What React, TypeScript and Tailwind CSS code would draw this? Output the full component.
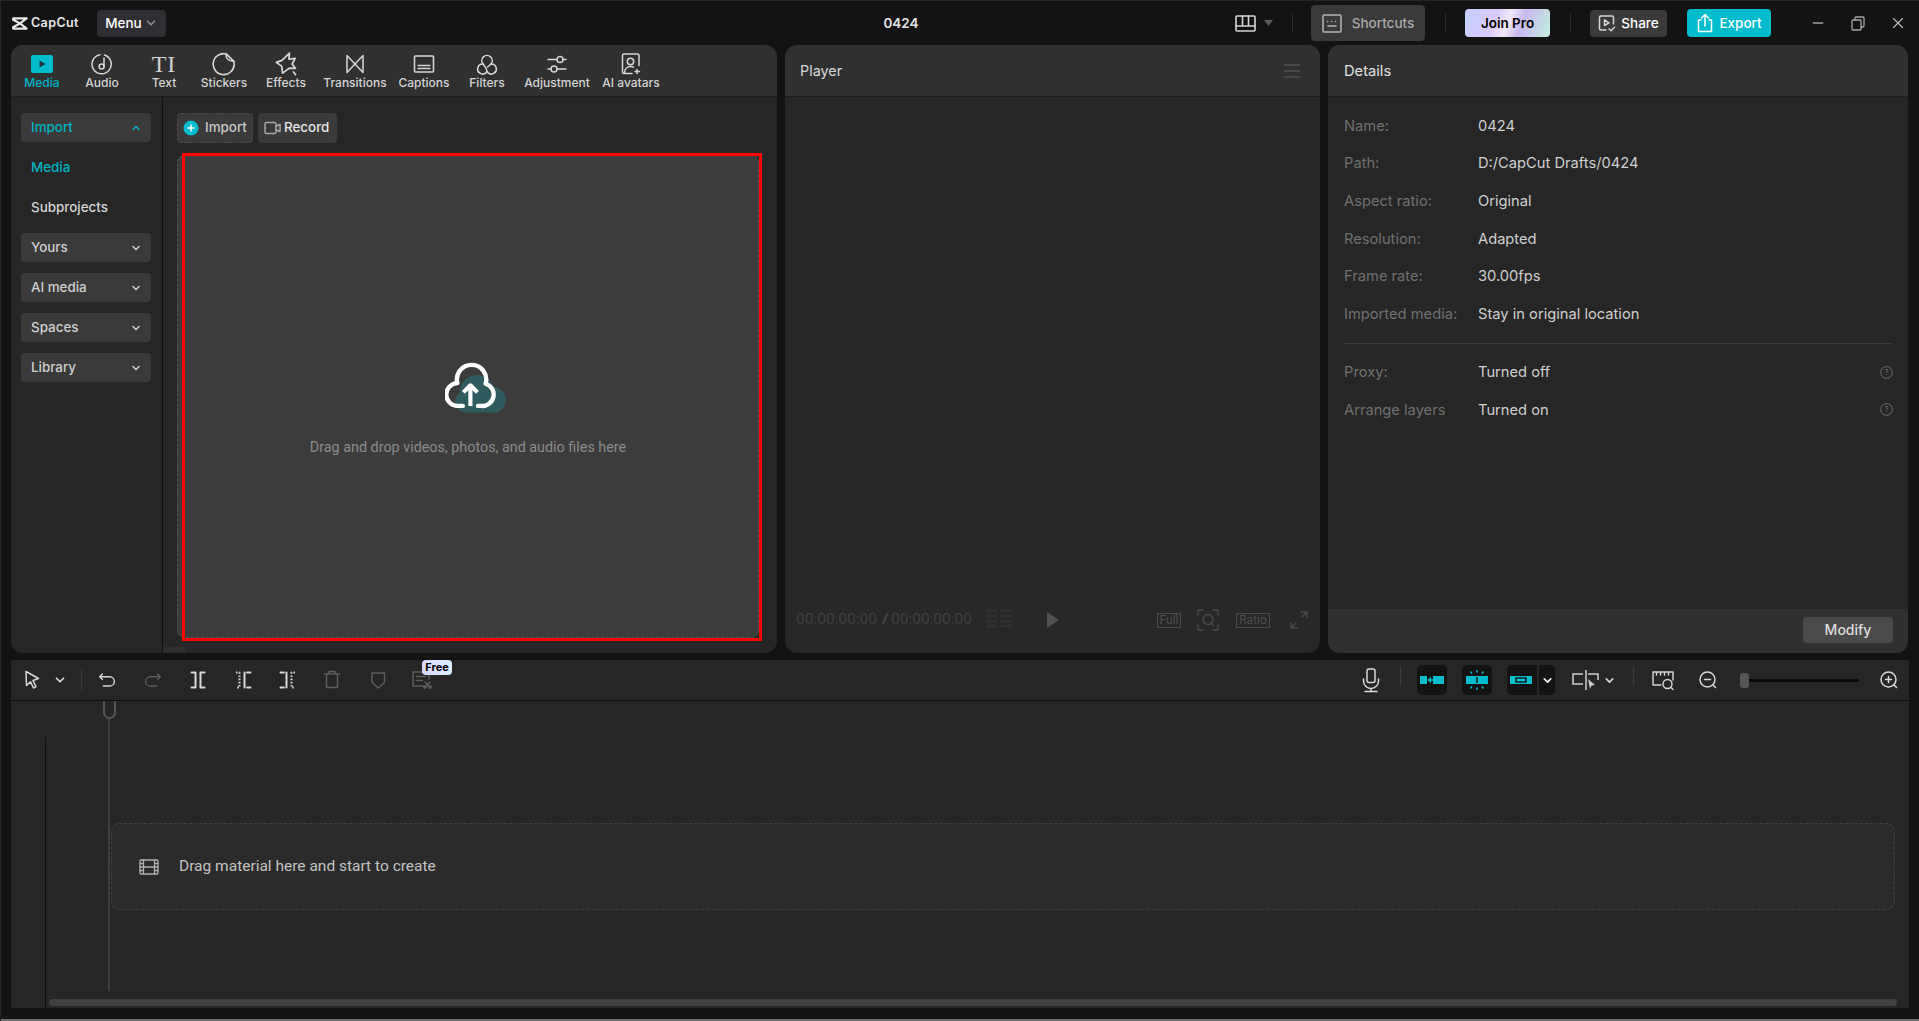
import React from "react";
import { ChevronDown, ChevronUp, Minus, X } from "lucide-react";

type SP = { children: React.ReactNode; className?: string; w?: number; h?: number; vb?: string; sw?: number };
const S = ({ children, className = "text-[#d6d6d6]", w = 24, h = 24, vb = "0 0 24 24", sw = 1.5 }: SP) => (
  <svg width={w} height={h} viewBox={vb} fill="none" stroke="currentColor" strokeWidth={sw} strokeLinecap="round" strokeLinejoin="round" className={className}>
    {children}
  </svg>
);

const tabs = [
  { label: "Media", w: "w-[60px]", active: true, icon: <svg width="22" height="18" viewBox="0 0 22 18"><rect width="22" height="18" rx="2" fill="#00bccd" /><path d="M8.5 5.5v7l6-3.5z" fill="#1c3337" /></svg> },
  { label: "Audio", w: "w-[60px]", icon: <S><path d="M14.5 3A9.6 9.6 0 1 1 10 2.7" /><path d="M14 6v8.5" /><circle cx="11.6" cy="14.6" r="2.5" /></S> },
  { label: "Text", w: "w-[64px]", icon: <span className="text-[24px] leading-6 text-[#cfcfcf] [font-family:'Liberation_Serif',serif] tracking-[1px]">TI</span> },
  { label: "Stickers", w: "w-[56px]", icon: <S vb="1 1 22 22"><path d="M14 2.8A9.6 9.6 0 1 0 21.3 12c0-1-.1-1.8-.4-2.6L14 2.8z" /><path d="M14 3c-.6 3.8 2 6.4 6.9 6.4" /></S> },
  { label: "Effects", w: "w-[68px]", icon: <S vb="2 1.5 20 21"><path d="M15 2.5l-.4 5.2 5.4-.7-2.6 5 2.8 3.8-5.2-.2-6 4.4-.8-6.1L3.5 10.6l5-1.8z" /><path d="M18.5 19l1.8 2.3" /></S> },
  { label: "Transitions", w: "w-[70px]", icon: <S><path d="M4 3.5l16 17v-17L4 20.5z" /></S> },
  { label: "Captions", w: "w-[68px]", icon: <S sw={1.6}><rect x="2.5" y="4" width="19" height="16" rx="1" /><path d="M6 13.5h12M6 16.5h12" strokeWidth="1.3" /></S> },
  { label: "Filters", w: "w-[58px]", icon: <S><path d="M8 12A5.2 5.2 0 1 1 16 12 5 5 0 1 1 12 19.5 5 5 0 1 1 8 12" /><path d="M8 12c1.4 2 3.4 3.5 4 7.5M16 12c-1 1-2.4 2-3.4 3" /></S> },
  { label: "Adjustment", w: "w-[82px]", icon: <S><path d="M3 7.5h9M18 7.5h3M3 17h3M12 17h9" /><circle cx="15" cy="7.5" r="3" /><circle cx="9" cy="17" r="3" /></S> },
  { label: "AI avatars", w: "w-[66px]", icon: <S><path d="M13 21.5H5a1.5 1.5 0 0 1-1.5-1.5V3.5A1.5 1.5 0 0 1 5 2h13.5A1.5 1.5 0 0 1 20 3.5v10" /><circle cx="11.5" cy="9.5" r="3.2" /><path d="M5.5 21c0-4 2.5-6.5 6-6.5 1.2 0 2.2.2 3 .7" /><path d="M18 17.5v4M16 19.5h4.5" /></S> },
];

const sideRows = ["Yours", "AI media", "Spaces", "Library"];
const basicRows = [
  ["Name:", "0424"],
  ["Path:", "D:/CapCut Drafts/0424"],
  ["Aspect ratio:", "Original"],
  ["Resolution:", "Adapted"],
  ["Frame rate:", "30.00fps"],
  ["Imported media:", "Stay in original location"],
];

const Sep = ({ className = "h-[18px]" }: { className?: string }) => <div className={`w-px bg-[#2c2c2c] ${className}`} />;

const Help = () => (
  <svg width="13" height="13" viewBox="0 0 13 13" className="ml-auto text-[#6f6f6f]">
    <circle cx="6.5" cy="6.5" r="5.8" fill="none" stroke="currentColor" />
    <text x="6.5" y="9.4" textAnchor="middle" fontSize="8" fill="currentColor" fontFamily="Inter">?</text>
  </svg>
);

const Cell = ({ w, children }: { w: string; children: React.ReactNode }) => <div className={`flex items-center justify-center ${w}`}>{children}</div>;

const DIM = "text-[#5c5c5c]";
const LT = "text-[#d8d8d8]";

export default function App() {
  return (
    <div className="w-[1919px] h-[1021px] flex flex-col overflow-hidden bg-[#131313] border-t border-l border-[#272727] text-[#d8d8d8] [font-family:Inter,sans-serif]">
      {/* Top bar */}
      <header className="h-[44px] shrink-0 flex items-center text-[13.5px] font-medium">
        <div className="flex items-center ml-[11px] w-[85px]">
          <svg width="16" height="13" viewBox="0 0 16 13" fill="none" stroke="#e8e8e8" strokeWidth="2.2" strokeLinecap="round" className="shrink-0">
            <path d="M1.2 1.4h13.4M1.2 11.6h13.4M1.2 1.4v1.4l6.8 3.6 6.6 5.2M1.2 11.6v-1.4l6.8-3.8 6.6-5" />
          </svg>
          <span className="ml-[3px] text-[12.5px] tracking-[0.4px] text-[#e8e8e8] font-semibold">CapCut</span>
        </div>
        <button className="h-[27px] w-[69px] rounded-[4px] bg-[#2e2e33] flex items-center justify-center gap-[2px] text-white">
          Menu <ChevronDown size={14} className="text-[#9a9a9a]" strokeWidth={2.4} />
        </button>
        <div className="ml-[717px] w-[36px] text-center text-[13.5px] font-semibold text-[#e4e4e4]">0424</div>
        <div className="ml-[316px] flex items-center">
          <S w={21} h={17} vb="0 0 21 17" sw={1.6}><rect x="1" y="1" width="19" height="15" rx="1" /><path d="M1 11h19M7.5 1v10M13.5 1v10" /></S>
          <svg width="9" height="6" viewBox="0 0 9 6" className="ml-[8px] text-[#5a5a5a]"><path d="M0 0h9L4.5 6z" fill="currentColor" /></svg>
          <Sep className="h-[18px] ml-[19px]" />
          <button className="ml-[18px] w-[114px] h-[36px] rounded-[4px] bg-[#3a3a3a] flex items-center justify-center gap-[10px] text-[#a9a9a9]">
            <S w={20} h={19} vb="0 0 20 19" className="text-[#b5b5b5]"><rect x="1" y="1" width="18" height="17" rx="1" /><path d="M5.5 7.5h.1M9.5 7.5h.1M13.5 7.5h.1M6 12h8" /></S>
            Shortcuts
          </button>
          <Sep className="h-[18px] ml-[20px]" />
          <button className="ml-[19px] w-[85px] h-[28px] rounded-[4px] text-black font-semibold bg-[linear-gradient(110deg,#c4d0fd_0%,#d9c9fa_35%,#f1e9f8_50%,#c9b8ef_65%,#c2efe0_100%)]">Join Pro</button>
          <Sep className="h-[18px] ml-[20px]" />
          <button className="ml-[19px] w-[77px] h-[27px] rounded-[4px] bg-[#3a3a3a] flex items-center justify-center gap-[5px] text-white">
            <S w={18} h={18} vb="0 0 18 18" className="text-[#d6d6d6]"><path d="M8 16H3a1.5 1.5 0 0 1-1.5-1.5v-11A1.5 1.5 0 0 1 3 2h11a1.5 1.5 0 0 1 1.5 1.5V10" /><path d="M6.5 6v5.5l4.5-2.7zM11 15l2 1.8 3.5-3.5" /></S>
            Share
          </button>
          <button className="ml-[20px] w-[84px] h-[28px] rounded-[4px] bg-[#00bccd] flex items-center justify-center gap-[5px] text-white">
            <S w={18} h={20} vb="0 0 18 20" className="text-white"><path d="M5 7H2.5v11.5h13V7H13M9 13V1.5M5.5 5L9 1.5 12.5 5" /></S>
            Export
          </button>
          <Minus size={16} className="ml-[39px] text-[#a0a0a0]" />
          <S w={14} h={15} vb="0 0 14 15" className="ml-[25px] text-[#a8a8a8]" sw={1.3}><rect x="1" y="4" width="9" height="10" rx="1" /><path d="M4 4V2a1 1 0 0 1 1-1h7a1 1 0 0 1 1 1v8a1 1 0 0 1-1 1h-2" /></S>
          <X size={18} className="ml-[24px] text-[#bdbdbd]" strokeWidth={1.5} />
        </div>
      </header>

      {/* Panels */}
      <main className="h-[608px] shrink-0 flex pl-[10px] gap-[8px]">
        {/* Left panel */}
        <section className="w-[766px] rounded-[12px] bg-[#262626] overflow-hidden flex flex-col">
          <nav className="h-[52px] shrink-0 flex pl-px bg-[#303030] border-b border-[#1d1d1d]">
            {tabs.map((t) => (
              <div key={t.label} className={`${t.w} flex flex-col items-center pt-[7px] text-[12px] font-medium ${t.active ? "text-[#00b3c4]" : "text-[#d4d4d4]"}`}>
                <div className="h-[24px] flex items-center justify-center">{t.icon}</div>
                <span className="leading-[14px] whitespace-nowrap">{t.label}</span>
              </div>
            ))}
          </nav>
          <div className="flex-1 flex min-h-0">
            <aside className="w-[152px] shrink-0 border-r border-[#111] pt-[16px] pl-[10px] pr-[11px] flex flex-col gap-[11px] text-[13.4px] font-medium">
              <div className="h-[29px] rounded-[4px] bg-[#3a3a3a] flex items-center justify-between pl-[10px] pr-[9px] text-[#00b3c4]">
                Import <ChevronUp size={12} strokeWidth={3} />
              </div>
              <div className="h-[29px] flex items-center pl-[10px] text-[#00b3c4]">Media</div>
              <div className="h-[29px] flex items-center pl-[10px] text-[#d4d4d4]">Subprojects</div>
              {sideRows.map((r) => (
                <div key={r} className="h-[29px] rounded-[4px] bg-[#3a3a3a] flex items-center justify-between pl-[10px] pr-[9px] text-[#cfcfcf]">
                  {r} <ChevronDown size={12} strokeWidth={3} />
                </div>
              ))}
            </aside>
            <div className="flex-1 relative pl-[14px] pt-[16px] pr-[18px] pb-[15px] flex flex-col">
              <div className="flex gap-[5px] text-[13.4px] font-medium">
                <button className="w-[76px] h-[30px] pb-[1px] rounded-[4px] bg-[#3a3a3a] border border-dashed border-[#4a4a4a] flex items-center pl-[5px] gap-[6px] text-[#c8c8c8]">
                  <svg width="16" height="16" viewBox="0 0 16 16" className="shrink-0"><circle cx="8" cy="8" r="7.5" fill="#00bccd" /><path d="M8 4.5v7M4.5 8h7" stroke="#fff" strokeWidth="1.5" /></svg>
                  Import
                </button>
                <button className="w-[79px] h-[30px] pb-[1px] rounded-[4px] bg-[#3a3a3a] flex items-center pl-[6px] gap-[3px] text-[#e6e6e6]">
                  <S w={17} h={14} vb="0 0 17 14" className="text-[#a8a8a8]"><rect x="1" y="1.5" width="11" height="11" rx="1.5" /><path d="M12 5l4-1.5v7L12 9" /></S>
                  Record
                </button>
              </div>
              <div className="mt-[12px] flex-1 rounded-[8px] bg-[#3c3c3c] border border-dashed border-[#555] flex flex-col items-center pt-[206px]">
                <svg width="66" height="51" viewBox="0 -1.5 60 47" className="ml-[20px] shrink-0">
                  <path d="M19 45A10 10 0 0 1 13 27 16 16 0 0 1 44 21 12.5 12.5 0 0 1 48 45Z" fill="#2f5a5e" />
                  <path d="M16 39H11.5A10 10 0 0 1 11 18 13.5 13.5 0 1 1 37 18.5 10.5 10.5 0 0 1 33 39H30" fill="none" stroke="#fff" strokeWidth="4" strokeLinecap="round" strokeLinejoin="round" />
                  <path d="M23 39V20M16.5 26.5l6.5-6.5 6.5 6.5" fill="none" stroke="#fff" strokeWidth="3.8" strokeLinejoin="round" />
                </svg>
                <p className="mt-[25px] text-[14.35px] leading-[20px] text-[#8b8b8b] [font-family:Roboto,sans-serif]">Drag and drop videos, photos, and audio files here</p>
              </div>
              {/* Red highlight annotation */}
              <div className="absolute left-[19px] top-[56px] right-[15px] bottom-[12px] border-[3px] border-[#ff0000] pointer-events-none" />
              <div className="absolute left-0 bottom-0 w-[22px] h-[6px] bg-[#2e2e2e]" />
            </div>
          </div>
        </section>

        {/* Player */}
        <section className="w-[535px] rounded-[12px] bg-[#272727] overflow-hidden flex flex-col">
          <div className="h-[52px] shrink-0 bg-[#303030] border-b border-[#1d1d1d] flex items-center justify-between pl-[15px] pr-[20px]">
            <span className="text-[14.4px] text-[#d8d8d8]">Player</span>
            <div className="w-[16px] flex flex-col gap-[4px]"><i className="h-[2px] bg-[#484848]" /><i className="h-[2px] bg-[#484848]" /><i className="h-[2px] bg-[#484848]" /></div>
          </div>
          <div className="flex-1" />
          <div className="h-[34px] mb-[16px] shrink-0 flex items-center pl-[11px] text-[15.5px] text-[#3f3f3f] [font-family:Roboto,sans-serif]">
            <span className="w-[81px] whitespace-nowrap">00:00:00:00</span>
            <span className="mx-[5px] w-[4px] text-[#565656]">/</span>
            <span className="w-[81px] whitespace-nowrap">00:00:00:00</span>
            <svg width="28" height="22" viewBox="0 0 28 22" className="ml-[13px] text-[#2f2f2f]"><path d="M1 2h11M1 7h11M1 12h11M1 17h11M15 2h12M15 7h12M15 12h12M15 17h12" stroke="currentColor" strokeWidth="3" /></svg>
            <svg width="12" height="16" viewBox="0 0 12 16" className="ml-[34px] text-[#505050]"><path d="M0 0l12 8-12 8z" fill="currentColor" /></svg>
            <span className="ml-[98px] h-[15px] w-[24px] border border-[#4a4a4a] text-[12px] leading-[13px] text-center text-[#4e4e4e]">Full</span>
            <S w={22} h={22} className="ml-[16px] text-[#4a4a4a]" vb="0 0 22 22"><path d="M1 6V1h5M16 1h5v5M21 16v5h-5M6 21H1v-5" /><circle cx="11" cy="10.5" r="5" /><path d="M14.5 14.5l2 2" /></S>
            <span className="ml-[17px] h-[15px] w-[34px] border border-[#4a4a4a] text-[12px] leading-[13px] text-center text-[#4e4e4e]">Ratio</span>
            <S w={18} h={18} vb="0 0 18 18" className="ml-[20px] text-[#4a4a4a]"><path d="M11 1h6v5M17 1l-4.5 4.5M7 17H1v-5M1 17l4.5-4.5" /></S>
          </div>
        </section>

        {/* Details */}
        <section className="w-[580px] rounded-[12px] bg-[#262626] overflow-hidden flex flex-col">
          <div className="h-[52px] pt-[1px] shrink-0 bg-[#303030] border-b border-[#1d1d1d] flex items-center pl-[16px]">
            <span className="text-[14.7px] text-[#e0e0e0]">Details</span>
          </div>
          <div className="flex-1 pl-[16px] pr-[15px] pt-[10px] text-[14.7px]">
            {basicRows.map(([k, v]) => (
              <div key={k} className="h-[37.6px] flex items-center">
                <span className="w-[134px] text-[#707070]">{k}</span>
                <span className="text-[#cfcfcf]">{v}</span>
              </div>
            ))}
            <div className="mt-[10px] mb-[10px] h-px bg-[#3a3a3a]" />
            {[["Proxy:", "Turned off"], ["Arrange layers", "Turned on"]].map(([k, v]) => (
              <div key={k} className="h-[37.6px] flex items-center">
                <span className="w-[134px] text-[#707070]">{k}</span>
                <span className="text-[#cfcfcf]">{v}</span>
                <Help />
              </div>
            ))}
          </div>
          <div className="h-[44px] pb-[3px] shrink-0 bg-[#303030] flex items-center justify-end pr-[15px]">
            <button className="w-[90px] h-[26px] rounded-[4px] bg-[#4a4a4a] text-[14px] font-medium text-[#dcdcdc]">Modify</button>
          </div>
        </section>
      </main>

      {/* Timeline */}
      <section className="mt-[7px] ml-[10px] w-[1898px] h-[348px] shrink-0 bg-[#262626] flex flex-col">
        <div className="h-[41px] shrink-0 border-b border-[#0f0f0f] flex items-center justify-between">
          <div className="flex items-center">
            <Cell w="w-[40px] ml-[2px]"><S w={20} h={20} vb="0 0 20 20" className={LT}><path d="M3 1.5l12.5 7-5.5 2 3 6.2-2.5 1.3-3-6.2-4 3.7z" /></S></Cell>
            <Cell w="w-[14px]"><ChevronDown size={14} strokeWidth={3} className={LT} /></Cell>
            <div className="ml-[14px] w-px h-[20px] bg-[#3a3a3a]" />
            <Cell w="w-[50px]"><S w={22} h={22} className={LT}><path d="M7 5.5L4 8.5l3 3M4.5 8.5H15a5 5 0 0 1 0 10H8" /></S></Cell>
            <Cell w="w-[42px]"><S w={22} h={22} className={DIM}><path d="M17 5.5l3 3-3 3M19.5 8.5H9a5 5 0 0 0 0 10h7" /></S></Cell>
            <Cell w="w-[48px]"><S w={20} h={20} vb="0 0 20 20" className={LT} sw={2}><path d="M3.5 2.5h4c0 5 0 10 0 15h-4M16.5 2.5h-4c0 5 0 10 0 15h4" /></S></Cell>
            <Cell w="w-[42px]"><S w={20} h={20} vb="0 0 20 20" className={LT} sw={2}><path d="M14 2.5h3.5M11.5 2.5v15M14 17.5h3.5" /><path d="M3 2.5h3.5v15H3" strokeDasharray="1.6 1.6" strokeLinecap="butt" /></S></Cell>
            <Cell w="w-[48px]"><S w={20} h={20} vb="0 0 20 20" className={LT} sw={2}><path d="M6 2.5H2.5M8.5 2.5v15M6 17.5H2.5" /><path d="M17 2.5h-3.5v15H17" strokeDasharray="1.6 1.6" strokeLinecap="butt" /></S></Cell>
            <Cell w="w-[40px]"><S w={20} h={20} vb="0 0 20 20" className={DIM}><path d="M2.5 4h15M7 4V1.5h6V4M4.5 4v13.5h11V4" /></S></Cell>
            <Cell w="w-[52px]"><S w={20} h={20} vb="0 0 20 20" className={DIM}><path d="M4 3h12.5v9.5l-6.2 5.5L4 12.5z" /></S></Cell>
            <div className="relative w-[36px] flex items-center justify-center">
              <S w={22} h={20} vb="0 0 22 20" className={DIM}><path d="M18 9V2H2v14h10M5.5 6.5h9M5.5 10.5h6" /><path d="M14 12l5 5M19 12l-5 5" /><circle cx="14" cy="17" r="1.2" /><circle cx="19" cy="17" r="1.2" /></S>
              <span className="absolute left-[18px] top-[-10px] w-[30px] h-[15px] rounded-[4px] bg-[linear-gradient(90deg,#d9d7ff,#dcefff)] text-black text-[11px] font-bold leading-[15px] text-center">Free</span>
            </div>
          </div>
          <div className="flex items-center pr-[10px]">
            <S w={20} h={26} vb="1 0 20 26" className={LT}><rect x="7" y="2" width="8" height="13.5" rx="2" /><path d="M3.5 12v2a7.5 7.5 0 0 0 15 0v-2M11 21.5V24M5 24.5h12" /></S>
            <div className="ml-[19px] w-px h-[20px] mb-[8px] bg-[#3a3a3a]" />
            <div className="ml-[16px] w-[30px] h-[30px] rounded-[5px] bg-[#131313] flex items-center justify-center">
              <svg width="24" height="10" viewBox="0 0 24 10"><rect y="1" width="7" height="8" fill="#00bccd" /><rect x="13" y="1" width="11" height="8" fill="#00bccd" /><path d="M8 5h7M11 2.5L8.5 5l2.5 2.5" stroke="#00bccd" strokeWidth="1.4" fill="none" /></svg>
            </div>
            <div className="ml-[15px] w-[30px] h-[30px] rounded-[5px] bg-[#131313] flex items-center justify-center">
              <svg width="24" height="24" viewBox="0 0 24 24"><rect x="1" y="8" width="22" height="8" fill="#00bccd" /><path d="M12 9v6" stroke="#131313" strokeWidth="1.6" /><path d="M12 2v2.5M12 19.5V22M5.5 3.5l1.5 2M18.5 3.5L17 5.5M5.5 20.5l1.5-2M18.5 20.5L17 18.5" stroke="#00bccd" strokeWidth="1.4" /></svg>
            </div>
            <div className="ml-[15px] w-[30px] h-[30px] rounded-l-[5px] bg-[#131313] flex items-center justify-center">
              <svg width="24" height="12" viewBox="0 0 24 12"><rect y="2" width="22" height="8" fill="#00bccd" /><rect x="6" y="4" width="10" height="4" fill="none" stroke="#131313" strokeWidth="1.4" /></svg>
            </div>
            <div className="ml-[2px] w-[16px] h-[30px] rounded-r-[5px] bg-[#131313] flex items-center justify-center">
              <ChevronDown size={13} strokeWidth={3} className="text-white" />
            </div>
            <div className="ml-[17px] w-[28px] flex justify-center">
              <svg width="28" height="22" viewBox="0 0 28 22" fill="none"><path d="M11 5H1v10h10M14 1v20M16 5h10v6" stroke="#d0d0d0" strokeWidth="1.5" /><path d="M16 10l7 6-3.5.5L18 20z" fill="#d0d0d0" /></svg>
            </div>
            <Cell w="w-[17px] ml-[1px]"><ChevronDown size={13} strokeWidth={3} className={LT} /></Cell>
            <div className="ml-[15px] w-px h-[20px] mb-[8px] bg-[#3a3a3a]" />
            <div className="ml-[17px]">
              <S w={24} h={22} vb="0 0 24 22" className={LT} sw={1.4}><path d="M10 16H2V3h20v8M5.5 3v3M9.5 3v3M13.5 3v3M17.5 3v3" /><circle cx="16.5" cy="15" r="4.5" /><path d="M20 18.5l2 2" /></S>
            </div>
            <div className="ml-[23px]">
              <S w={20} h={20} vb="0 0 20 20" className={LT}><circle cx="9.5" cy="9.5" r="7.5" /><path d="M6.5 9.5h6M15 15l2.5 2.5" /></S>
            </div>
            <div className="ml-[22px] w-[119px] h-[15px] flex items-center relative">
              <div className="w-full h-[3px] bg-[#0a0a0a] rounded-full" />
              <div className="absolute left-0 top-0 w-[9px] h-[15px] rounded-[3px] bg-[#555]" />
            </div>
            <div className="ml-[20px]">
              <S w={20} h={20} vb="0 0 20 20" className={LT}><circle cx="9.5" cy="9.5" r="7.5" /><path d="M6.5 9.5h6M9.5 6.5v6M15 15l2.5 2.5" /></S>
            </div>
          </div>
        </div>
        <div className="flex-1 relative flex flex-col min-h-0">
          <div className="absolute left-[34px] top-[36px] bottom-0 w-px bg-[#111]" />
          <div className="absolute left-[97px] top-0 bottom-[17px] w-[2px] bg-[#3e3e3e]" />
          <div className="absolute left-[92px] top-0 w-[13px] h-[18px] rounded-b-[7px] border-2 border-t-0 border-[#555] bg-[#262626]" />
          <div className="mt-[122px] ml-[100px] mr-[14px] h-[87px] rounded-[8px] border border-dashed border-[#3f3f3f] bg-[#2b2b2b] flex items-center pl-[27px]">
            <S w={20} h={16} vb="0 0 20 16" className="text-[#b0b0b0]" sw={1.3}><rect x="1" y="1" width="18" height="14" rx="1" /><path d="M4.5 1v14M15.5 1v14M4.5 8h11M1 4.5h3.5M1 8h3.5M1 11.5h3.5M15.5 4.5H19M15.5 8H19M15.5 11.5H19" /></S>
            <span className="ml-[20px] text-[15.5px] text-[#c2c2c2] [font-family:Roboto,sans-serif]">Drag material here and start to create</span>
          </div>
          <div className="mt-auto mb-[2px] ml-[38px] mr-[12px] h-[7px] rounded-full bg-[#404040]" />
        </div>
      </section>
      <div className="flex-1" />
      <div className="h-[2px] shrink-0 bg-[#6f6f6f]" />
    </div>
  );
}
